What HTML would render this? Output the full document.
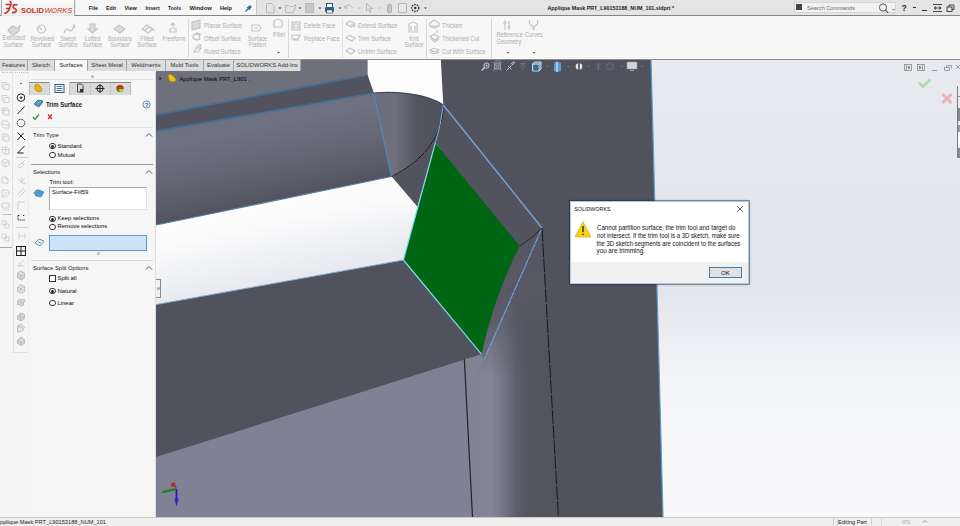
<!DOCTYPE html>
<html><head><meta charset="utf-8">
<style>
*{margin:0;padding:0;box-sizing:border-box}
html,body{width:960px;height:526px;overflow:hidden;background:#f4f4f4;font-family:"Liberation Sans",sans-serif;color:#222}
.abs{position:absolute}
#vp{position:absolute;left:0;top:0;width:960px;height:526px}
.menu{top:5px;font-size:6px;font-weight:bold;color:#1c1c1c;letter-spacing:0.1px}
.tab{position:absolute;top:59px;height:12px;background:#dcdcdc;border:1px solid #a4a4a4;border-bottom:none;font-size:5.9px;color:#333;text-align:center;line-height:10.5px;white-space:nowrap;overflow:hidden}
.tab.act{background:#f7f7f7;height:13px;color:#222}
.pmh{position:absolute;left:33px;font-size:5.9px;color:#1a1a1a;white-space:nowrap}
.pmt{position:absolute;left:57.5px;font-size:5.9px;color:#0a0a0a;white-space:nowrap}
.caret{left:145px}
.radio{position:absolute;left:49px;width:6.5px;height:6.5px;border-radius:50%;border:0.8px solid #333;background:#fff}
.radio.on::after{content:"";position:absolute;left:1.2px;top:1.2px;width:3px;height:3px;border-radius:50%;background:#222}
.rl{position:absolute;font-size:6.9px;color:#adadad;white-space:nowrap;line-height:6.6px;text-align:center;transform:scaleX(0.82);transform-origin:50% 0}
.rs{position:absolute;font-size:6.9px;color:#adadad;white-space:nowrap;line-height:7px;transform:scaleX(0.84);transform-origin:0 0}
</style></head><body>

<!-- TITLE BAR -->
<div class="abs" style="left:0;top:0;width:257px;height:16px;background:#f6f6f6"></div>
<div class="abs" style="left:257px;top:0;width:703px;height:16px;background:#e4e4e4"></div>
<div class="abs" style="left:256px;top:0;width:1px;height:16px;background:#c8c8c8"></div>
<div class="abs" style="left:0;top:15px;width:960px;height:1px;background:#858585"></div>
<div class="abs" style="left:1px;top:0;width:74px;height:18px;background:linear-gradient(#fafafa,#e9e9e9);border:1px solid #a9a9a9;border-top:none;box-shadow:0 1px 1px rgba(0,0,0,.25)"></div>
<svg class="abs" style="left:0;top:0" width="76" height="18" viewBox="0 0 76 18">
<path d="M9.5,1.2 q2.2,0.8 1.2,2.4 M5.5,4.5 h5.5 l-1.8,4 M6,8.5 h3.5 q-1.5,4.5 -5.2,4.8" fill="none" stroke="#c4312d" stroke-width="1.6"/>
<path d="M17.5,5 q-4,-1 -4.5,1.5 q0,1.5 2,2.2 q2,0.8 1,2.8 q-1,1.5 -4,1" fill="none" stroke="#c4312d" stroke-width="1.6"/>
<text x="21" y="13" font-family="Liberation Sans" font-weight="bold" font-size="8" fill="#c4312d" textLength="23" lengthAdjust="spacingAndGlyphs">SOLID</text>
<text x="44.5" y="13" font-family="Liberation Sans" font-style="italic" font-size="8" fill="#c4312d" textLength="27.5" lengthAdjust="spacingAndGlyphs">WORKS</text>
</svg>
<svg class="abs" style="left:80px;top:0" width="160" height="15" viewBox="80 0 160 15"><g font-family="Liberation Sans" font-weight="bold" font-size="6.2" fill="#1c1c1c"><text x="88.75" y="10.3" textLength="9.35" lengthAdjust="spacingAndGlyphs">File</text><text x="106.00" y="10.3" textLength="10.00" lengthAdjust="spacingAndGlyphs">Edit</text><text x="124.40" y="10.3" textLength="12.50" lengthAdjust="spacingAndGlyphs">View</text><text x="145.60" y="10.3" textLength="14.15" lengthAdjust="spacingAndGlyphs">Insert</text><text x="168.00" y="10.3" textLength="13.00" lengthAdjust="spacingAndGlyphs">Tools</text><text x="189.40" y="10.3" textLength="22.50" lengthAdjust="spacingAndGlyphs">Window</text><text x="220.00" y="10.3" textLength="12.00" lengthAdjust="spacingAndGlyphs">Help</text></g></svg>
<svg class="abs" style="left:244px;top:4px" width="9" height="9" viewBox="0 0 9 9"><path d="M1.5,7.5 L4,5" stroke="#2a6a8a" stroke-width="1.3"/><path d="M3,3.5 L5.5,6 L6,4.5 L7.5,3 L6,1.5 L4.5,3 z" fill="#2a6a8a" stroke="#2a6a8a" stroke-width="0.8"/></svg>
<svg class="abs" style="left:256px;top:0" width="180" height="16" viewBox="256 0 180 16">
<g fill="none" stroke="#b8b8b8" stroke-width="1">
<path d="M266.5,3.5 h5 l2.5,2.5 v7 h-7.5 z"/>
<path d="M285.5,5.5 h3 l1,1 h4 l2,-2 v2 l-2,6 h-8 z"/>
<rect x="305.5" y="3.5" width="8" height="9" fill="#c8c8c8"/>
<path d="M345,8 q2,-5 6,-2 l2,2 M345,5 v3 h3"/>
<path d="M366.5,3.5 l6,5 h-3 l1.5,3.5 l-1,0.5 l-1.5,-3.5 l-2,2 z"/>
<rect x="387.5" y="4" width="4" height="9" rx="2" fill="#c4c4c4" stroke="#b0b0b0"/>
<rect x="398.5" y="3.5" width="8" height="9" fill="#e8e8e8"/>
</g>
<g fill="#333"><path d="M278.5,7.5 h3 l-1.5,1.5z M298.5,7.5 h3 l-1.5,1.5z M318.5,7.5 h3 l-1.5,1.5z M338.5,7.5 h3 l-1.5,1.5z M424,7.5 h3 l-1.5,1.5z" /></g>
<g fill="#bbb"><path d="M358,7.5 h3 l-1.5,1.5z M377.5,7.5 h3 l-1.5,1.5z"/></g>
<g><rect x="325" y="7" width="9" height="5" rx="1" fill="#2e5f82"/><rect x="326.5" y="3.5" width="6" height="4" fill="#fff" stroke="#2e5f82"/><rect x="326.5" y="10" width="6" height="3" fill="#fff" stroke="#2e5f82" stroke-width="0.8"/></g>
<circle cx="415.3" cy="8" r="3.5" fill="none" stroke="#333" stroke-width="1.3" stroke-dasharray="1.5,1"/>
<circle cx="415.3" cy="8" r="1.2" fill="#333"/>
</svg>
<svg class="abs" style="left:545px;top:0" width="135" height="15" viewBox="545 0 135 15"><text x="547.5" y="10.3" font-family="Liberation Sans" font-weight="bold" font-size="6.1" fill="#1a1a1a" textLength="126.7" lengthAdjust="spacingAndGlyphs">Applique Mask PRT_L90153188_NUM_101.sldprt *</text></svg>
<div class="abs" style="left:794px;top:2px;width:102px;height:11px;background:#f2f2f2;border:1px solid #d6d6d6"></div>
<div class="abs" style="left:796px;top:4px;width:6px;height:6px;background:#444;"></div>
<svg class="abs" style="left:805px;top:2px" width="55" height="12" viewBox="805 2 55 12"><text x="807" y="10" font-family="Liberation Sans" font-size="5.8" fill="#6a6a6a" textLength="48" lengthAdjust="spacingAndGlyphs">Search Commands</text></svg>
<svg class="abs" style="left:877px;top:2px" width="20" height="12" viewBox="0 0 20 12"><circle cx="6" cy="5.5" r="3.6" fill="none" stroke="#555" stroke-width="1"/><path d="M8.6,8.2 L11,10.8" stroke="#555" stroke-width="1.2"/><path d="M15,7 h3 l-1.5,1.5z" fill="#777"/></svg>
<svg class="abs" style="left:900px;top:2px" width="10" height="12" viewBox="900 2 10 12"><text x="901.5" y="11.3" font-family="Liberation Sans" font-weight="bold" font-size="8.6" fill="#2a2a2a">?</text></svg>
<div class="abs" style="left:913px;top:7px;width:3px;height:1px;background:#333"></div>
<div class="abs" style="left:922px;top:10px;width:5px;height:1.2px;background:#333"></div>
<svg class="abs" style="left:932px;top:3px" width="12" height="10" viewBox="0 0 12 10"><path d="M1,1.5 h9 M1,8.5 h9 M2,5 h7 M4,3.5 l-2,1.5 l2,1.5 M7,3.5 l2,1.5 l-2,1.5" stroke="#333" stroke-width="0.9" fill="none"/></svg>
<svg class="abs" style="left:945px;top:3px" width="12" height="10" viewBox="0 0 12 10"><rect x="2" y="4" width="5" height="4.5" fill="none" stroke="#333" stroke-width="0.9"/><path d="M4,4 v-2 h5 v4.5 h-2" fill="none" stroke="#333" stroke-width="0.9"/></svg>

<!-- RIBBON -->
<div class="abs" style="left:0;top:16px;width:960px;height:43px;background:#f7f7f7"></div>
<div class="abs" style="left:0;top:58px;width:960px;height:1px;background:#fcfcfc"></div>
<div class="rl" style="left:0;top:35px;width:27px">Extruded<br>Surface</div>
<div class="rl" style="left:28px;top:35.9px;width:27px">Revolved<br>Surface</div>
<div class="rl" style="left:55px;top:35.9px;width:26px">Swept<br>Surface</div>
<div class="rl" style="left:80px;top:35.9px;width:25px">Lofted<br>Surface</div>
<div class="rl" style="left:105px;top:35.9px;width:30px">Boundary<br>Surface</div>
<div class="rl" style="left:134px;top:35.9px;width:26px">Filled<br>Surface</div>
<div class="rl" style="left:160px;top:35.9px;width:27px">Freeform</div>
<div class="abs" style="left:188px;top:19px;width:1px;height:39px;background:#d8d8d8"></div>
<div class="rs" style="left:204px;top:22.2px">Planar Surface</div>
<div class="rs" style="left:204px;top:35.2px">Offset Surface</div>
<div class="rs" style="left:204px;top:48.2px">Ruled Surface</div>
<div class="rl" style="left:245px;top:35.9px;width:25px">Surface<br>Flatten</div>
<div class="rl" style="left:270px;top:32.4px;width:18px">Fillet</div>
<div class="abs" style="left:288px;top:19px;width:1px;height:39px;background:#d8d8d8"></div>
<div class="rs" style="left:304px;top:22.2px">Delete Face</div>
<div class="rs" style="left:304px;top:35.2px">Replace Face</div>
<div class="abs" style="left:342px;top:19px;width:1px;height:39px;background:#e2e2e2"></div>
<div class="rs" style="left:358px;top:22.2px">Extend Surface</div>
<div class="rs" style="left:358px;top:35.2px">Trim Surface</div>
<div class="rs" style="left:358px;top:48.2px">Untrim Surface</div>
<div class="rl" style="left:402px;top:35.9px;width:24px">Knit<br>Surface</div>
<div class="abs" style="left:426px;top:19px;width:1px;height:39px;background:#d8d8d8"></div>
<div class="rs" style="left:442px;top:22.2px">Thicken</div>
<div class="rs" style="left:442px;top:35.2px">Thickened Cut</div>
<div class="rs" style="left:442px;top:48.2px">Cut With Surface</div>
<div class="abs" style="left:491px;top:19px;width:1px;height:39px;background:#d8d8d8"></div>
<div class="rl" style="left:494px;top:32.4px;width:28px">Reference<br>Geometry</div>
<div class="rl" style="left:522px;top:32.4px;width:24px">Curves</div>
<svg class="abs" style="left:0;top:16px" width="560" height="42" viewBox="0 16 560 42">
<g fill="none" stroke="#c4c4c4" stroke-width="1.2">
<path d="M8,30 l4,-4 l6,2 l2,-3 l-1,6 l-6,5 z" fill="#dadada"/>
<circle cx="41.5" cy="29" r="4"/><path d="M39,27 l3,3"/>
<path d="M64,33 q2,-6 5,-3 q3,3 5,-5 l1,3"/>
<path d="M90,24 h5 v5 h2 l-4.5,4 l-4.5,-4 h2 z" fill="#dadada"/>
<path d="M114,29 l5,-4 l6,4 l-5,4 z" fill="#dadada"/>
<path d="M142,29 l5,-4 l6,4 l-5,4 z M144,31 l5,-4 l6,4"/>
<path d="M170,29 q3,-2 6,0 v3 h-6 z M173,27 v-3 M171,25 l2,-2 l2,2"/>
<path d="M192,22 l8,-2 v8 l-8,2 z" fill="#dadada"/>
<path d="M193,36 q2,-3 6,-1 l1,4 q-4,2 -7,-1 z M195,34 q3,-2 6,1"/>
<path d="M194,52 l3,-4 h4 l-3,4 z M196,48 l2,-3 h3 l-2,3"/>
<path d="M252,25 h7 l2,3 l-2,3 h-7 z M254,28 h4"/>
<path d="M274,21 q4,-3 8,0 v6 h-8 z"/>
<path d="M292,22 h8 v8 h-8 z M294,24 h4 v4 h-4 z"/>
<path d="M292,35 h8 l-2,4 h-6 z M293,40 h6"/>
<path d="M346,24 l4,-3 l5,3 l-4,3 z M351,24 l4,3"/>
<path d="M346,38 q2,-3 5,-2 l4,2 l-3,3 z"/>
<path d="M346,51 l4,-3 l5,3 l-4,3 z"/>
<path d="M409,24 q4,-3 8,0 v8 h-8 z M411,26 v5 M415,26 v5"/>
<path d="M430,23 l4,-3 l5,3 v3 h-9 z M430,26 l4,2 l5,-2"/>
<path d="M430,37 l4,-3 l5,3 l-4,3 z M431,39 l4,3 l4,-3 M437,33 v-3"/>
<path d="M430,50 q4,-3 9,0 q-4,3 -9,0 z M430,52 q4,3 9,0"/>
<path d="M505,20 v10 M509,21 v9 M503,23 h4 M507,27 h4"/>
<path d="M530,20 q-2,3 1,5 q3,2 2,5 M537,20 q2,3 -1,5 q-3,2 -2,5"/>
</g>
<g fill="#555"><path d="M277,52 h3 l-1.5,1.5z M506.5,52 h3 l-1.5,1.5z M532.5,52 h3 l-1.5,1.5z"/></g>
</svg>

<svg id="vp" width="960" height="526" viewBox="0 0 960 526">
<defs>
<linearGradient id="bg" gradientUnits="userSpaceOnUse" x1="0" y1="59" x2="0" y2="517">
<stop offset="0" stop-color="#e8eaf0"/><stop offset="0.5" stop-color="#e3e5ed"/><stop offset="0.7" stop-color="#f4f5f8"/><stop offset="1" stop-color="#f9f9fb"/></linearGradient>
<linearGradient id="front" gradientUnits="userSpaceOnUse" x1="156" y1="131" x2="175" y2="225">
<stop offset="0" stop-color="#6e7080"/><stop offset="0.15" stop-color="#6f7282"/><stop offset="0.5" stop-color="#666877"/><stop offset="0.8" stop-color="#5a5c69"/><stop offset="1" stop-color="#4f505b"/></linearGradient>
<linearGradient id="white" gradientUnits="userSpaceOnUse" x1="160" y1="215" x2="178" y2="300">
<stop offset="0" stop-color="#fefefe"/><stop offset="0.35" stop-color="#fbfbfc"/><stop offset="1" stop-color="#e8eaef"/></linearGradient>
<linearGradient id="cyl" x1="0" y1="0" x2="1" y2="0">
<stop offset="0" stop-color="#6c6d7a"/><stop offset="0.3" stop-color="#6f707e"/><stop offset="0.62" stop-color="#545560"/><stop offset="1" stop-color="#50515c"/></linearGradient>
<linearGradient id="fillet" gradientUnits="userSpaceOnUse" x1="466" y1="0" x2="536" y2="0">
<stop offset="0" stop-color="#7f8293"/><stop offset="0.35" stop-color="#858798"/><stop offset="0.55" stop-color="#737585"/><stop offset="0.72" stop-color="#5c5e6b"/><stop offset="0.85" stop-color="#545662"/><stop offset="1" stop-color="#52545f"/></linearGradient>
<linearGradient id="band" gradientUnits="userSpaceOnUse" x1="0" y1="240" x2="0" y2="360">
<stop offset="0" stop-color="#555662"/><stop offset="0.6" stop-color="#5a5b67"/><stop offset="1" stop-color="#6b6c79"/></linearGradient>
<linearGradient id="fdark" gradientUnits="userSpaceOnUse" x1="0" y1="230" x2="0" y2="380">
<stop offset="0" stop-color="#555662" stop-opacity="1"/><stop offset="0.4" stop-color="#575864" stop-opacity="0.9"/><stop offset="1" stop-color="#52535e" stop-opacity="0"/></linearGradient>
</defs>
<rect x="156" y="59" width="804" height="458" fill="url(#bg)"/>
<!-- dark wall -->
<polygon points="440.8,59 651,59 663,517 440,517" fill="#50525d"/>
<!-- white gap top -->
<polygon points="367.6,59 440.8,59 443.3,105 373.8,93 367.6,75" fill="#fdfdfe"/>
<!-- top face -->
<polygon points="156,59 367.6,59 367.6,75 156,115" fill="#6e707c"/>
<!-- strip -->
<polygon points="156,115 367.6,75 373.8,93 156,131.2" fill="#52535e"/>
<!-- front face -->
<polygon points="156,131.2 373.8,93 391.5,176.5 156,225" fill="url(#front)"/>
<polygon points="373.8,93 443.3,105 542,228 519.7,246 435.3,143 417.5,207 391.5,176.5" fill="#52535e"/>
<!-- cylinder end -->
<path d="M373.8,93 C390,91.5 425,92 443.3,105 C443,135 425,160 391.5,176.5 Z" fill="url(#cyl)"/>
<!-- white face -->
<polygon points="156,225 391.5,176.5 417.5,207 403.4,260 156,304.6" fill="url(#white)"/>
<!-- lower front face -->
<polygon points="156,450 481.4,347 484.1,359.5 542,228 558.4,517 156,517" fill="#7f8294"/>
<!-- lower side face -->
<polygon points="156,304.6 403.4,260 481.4,354.2 156,457" fill="#50525d"/>
<polygon points="464.3,358.8 484.1,359.5 542,228 558.4,517 472.5,517" fill="url(#fillet)"/>
<polygon points="484.1,359.5 542,228 550.6,380 470,380" fill="url(#fdark)"/>
<!-- band between green and blue dashed -->
<path d="M519.7,246 L542,228 L484.1,359.5 L481.4,354.2 Q494,296 519.7,246 Z" fill="url(#band)"/>
<!-- green -->
<path d="M435.3,143 L519.7,246 Q494,296 481.4,354.2 L403.4,260 Z" fill="#006614"/>
<!-- edges -->
<g fill="none" stroke-width="1.2">
<line x1="156" y1="115" x2="367.6" y2="75" stroke="#3e7099" stroke-width="1.7"/>
<line x1="156" y1="131.2" x2="373.8" y2="93" stroke="#3e7099" stroke-width="1.7"/>
<line x1="156" y1="225" x2="391.5" y2="176.5" stroke="#4d7ea3"/>
<line x1="156" y1="304.6" x2="403.4" y2="260" stroke="#7fb0d4" stroke-width="1"/>
<line x1="373.8" y1="93" x2="391.5" y2="176.5" stroke="#4f8ab5"/>
<path d="M373.8,93 C390,91.5 425,92 443.3,105" stroke="#3d4a5e"/>
<path d="M443.3,105 C443,135 425,160 391.5,176.5" stroke="#151515" stroke-width="0.9" stroke-dasharray="4,0.8"/>
<path d="M435.3,143 Q441,125 443.3,105" stroke="#7ab4e0" stroke-width="1"/>
<line x1="443.3" y1="105" x2="542" y2="228" stroke="#76a2d4" stroke-width="1.4"/>
<line x1="542" y1="228" x2="484.1" y2="359.5" stroke="#6aa2d8" stroke-width="1.2" stroke-dasharray="8,0.7"/>
<line x1="435.3" y1="143" x2="403.4" y2="260" stroke="#7fd8ee"/>
<line x1="403.4" y1="260" x2="481.4" y2="354.2" stroke="#7fd8ee"/>
<path d="M519.7,246 Q533,238 542,228" stroke="#1a1a1a" stroke-width="0.8"/>
<line x1="542" y1="228" x2="558.4" y2="517" stroke="#161616" stroke-width="1" stroke-dasharray="14,1.2"/>
<line x1="464.3" y1="358.8" x2="472.5" y2="517" stroke="#222"/>
<line x1="651" y1="59" x2="663" y2="517" stroke="#5aa0c8"/>
<line x1="0" y1="59.5" x2="960" y2="59.5" stroke="#8c8c8c" stroke-width="1"/>
</g>
</svg>

<!-- TABS -->
<div class="abs" style="left:0;top:59px;width:156px;height:12px;background:#f5f5f5"></div>
<div class="tab" style="left:-1px;width:29px">Features</div>
<div class="tab" style="left:27px;width:28px">Sketch</div>
<div class="tab act" style="left:54px;width:34px">Surfaces</div>
<div class="tab" style="left:87px;width:40px">Sheet Metal</div>
<div class="tab" style="left:126px;width:40px">Weldments</div>
<div class="tab" style="left:165px;width:39px">Mold Tools</div>
<div class="tab" style="left:203px;width:31px">Evaluate</div>
<div class="tab" style="left:233px;width:68px">SOLIDWORKS Add-Ins</div>

<!-- LEFT PANEL -->
<div class="abs" style="left:0;top:71px;width:156px;height:446px;background:#f5f5f5"></div>
<div class="abs" style="left:29px;top:72px;width:126px;height:445px;background:#f6f6f6"></div>
<div class="abs" style="left:2px;top:72px;width:10px;height:1px;border-top:1px dotted #c0c0c0"></div>
<div class="abs" style="left:15px;top:72px;width:13px;height:1px;border-top:1px dotted #c0c0c0"></div>
<div class="abs" style="left:12px;top:72px;width:1px;height:176px;background:#e2e2e2"></div>
<div class="abs" style="left:0;top:247px;width:12px;height:1px;background:#a8a8a8"></div>
<div class="abs" style="left:13px;top:250px;width:1px;height:102px;background:#e2e2e2"></div>
<div class="abs" style="left:13px;top:352px;width:15px;height:1px;background:#e0e0e0"></div>
<div class="abs" style="left:28px;top:72px;width:1px;height:280px;background:#eeeeee"></div>
<div class="abs" style="left:31px;top:79px;width:122px;height:1px;background:#e4e4e4"></div>
<div class="abs" style="left:90.5px;top:74.5px;width:3px;height:3px;border-radius:50%;background:#bbb"></div>

<svg class="abs" style="left:0;top:72px" width="29" height="282" viewBox="0 72 29 282">
<g fill="none" stroke="#cdcdcd" stroke-width="0.9">
<path d="M2,82.5 h5 l2,2 v5 h-5 l-2,-2 z M4,84.5 h5 M4,84.5 v5"/>
<path d="M2,95.5 h5 l2,2 v5 h-5 l-2,-2 z M4,97.5 h5 M4,97.5 v5"/>
<path d="M2,108 h5 l2,2 v5 h-5 l-2,-2 z M2,110.5 h7 M4,108 v7"/>
<path d="M2,121 h5 l2,2 v5 h-5 l-2,-2 z M2,123 l3,2 h4"/>
<path d="M2,134 h5 l2,2 v5 h-5 l-2,-2 z M4,136 h5 M4,136 v5"/>
<path d="M2,147 h5 l2,2 v5 h-5 l-2,-2 z M2,149.5 h7 M5.5,147 v7"/>
<path d="M2,161 l3,-2 l4,2 v4 l-4,2 l-3,-2 z M5,163 v4 M2,161 l3,2 l4,-2"/>
<path d="M2,177 h4 l2,2 v4 h-6 z M6,177 v2 h2"/>
<path d="M2,190 h5 l2,2 v2 l-3,3 h-4 z M3,196 l4,-4"/>
<path d="M2,203 h7 v5 h-7 z M4,210 h2 M7,210 h2"/>
<path d="M2,221 h4 v4 h-4 z M5,224 h4 v4 h-4 z"/>
<path d="M2,234 h4 v4 h-4 z M5,237 h4 v4 h-4 z"/>
<path d="M19,165 q3,-3 5,-1 q-2,4 -5,4 q-2,-1 0,-3 z M21,164 l4,-4"/>
<path d="M18,179 l4,3 M20,183 l5,-5 M22,177 v6 h4"/>
<path d="M17,195 l7,-7 M19,197 l7,-7"/>
<path d="M18,210 v-8 h7"/>
<path d="M19,236 h6 M19,233 v6 M25,233 v6"/>
<path d="M17.5,266 l6,-6 M17.5,266 h7 M21,266 q0,-2 -1.5,-3"/>
</g>
<g fill="#d6d6d6" stroke="#b4b4b4" stroke-width="0.8">
<path d="M17.5,273 l3,-2 l4,2 v5 l-3,2 l-4,-2 z M17.5,273 l3.5,2 l3.5,-2 M21,275 v5"/>
<path d="M17.5,287 l3,-2.5 l4,2 v5 l-3,2 l-4,-2 z M19,287 l4,4 M23,287 l-4,4" fill="#e2e2e2"/>
<path d="M17.5,301 l2.5,-2 l2,1 l2,-1 l1,2 l-2,2 l1,2 l-3,1 l-2,-2 l-1.5,1 z M19.5,301 l3,3"/>
<path d="M17.5,316 l3,-3 l4,1.5 v4 l-3,2.5 l-4,-1.5 z M20.5,313 v7 M17.5,316 l7,2"/>
<path d="M17.5,330 v-4 l3,-2 l4,3 l-2,4 l-5,1 z M17.5,326 l5,2" fill="#e4e4e4"/>
<path d="M17.5,340 l3.5,-3 l3.5,2.5 v4 l-3.5,2 l-3.5,-2 z M21,339.5 v5.5 M17.5,340 l3.5,2 l3.5,-2"/>
</g>
<path d="M2.5,214.5 h9" stroke="#bdbdbd" stroke-width="1"/>
<path d="M16,157.5 h12 M16,227.5 h12" stroke="#c8c8c8" stroke-width="0.8"/>
<g fill="none" stroke="#1e1e1e" stroke-width="1">
<circle cx="21" cy="83.5" r="0.7" fill="#1e1e1e" stroke="none"/>
<circle cx="21" cy="97.6" r="3.8"/><circle cx="21" cy="97.6" r="0.8" fill="#1e1e1e"/>
<path d="M17.5,114 l7,-7.5"/>
<circle cx="21" cy="123" r="3.8" stroke-dasharray="1.5,0.6"/>
<path d="M17.5,132.5 q3,3 7.5,7.5 M17.5,140 l6,-7"/>
<path d="M17.5,153 l7,-7 M17.5,153 h6"/>
<path d="M18,215.5 v4.5 h7 M18,215.5 h2 M23,215.5 h2" stroke-dasharray="1.2,0.8"/>
<rect x="16.5" y="246.5" width="9" height="9"/><path d="M21,246.5 v9 M16.5,251 h9"/>
</g>
</svg>
<!-- PM tabs -->
<div class="abs" style="left:29px;top:82px;width:102px;height:13px;background:#d9d9d9;border:1px solid #bdbdbd;border-top:1px solid #8a8a8a;border-bottom:none"></div>
<div class="abs" style="left:49px;top:82px;width:20.5px;height:13px;background:#f6f6f6;border-left:1px solid #c3c3c3;border-right:1px solid #c3c3c3"></div>
<div class="abs" style="left:90.2px;top:83px;width:1px;height:12px;background:#c3c3c3"></div>
<div class="abs" style="left:110px;top:83px;width:1px;height:12px;background:#c3c3c3"></div>
<svg class="abs" style="left:29px;top:82px" width="102" height="13" viewBox="29 82 102 13">
<path d="M35,85 q3,-2 5,1 l2,3 q0,3 -3,3 q-3,-1 -4,-3 z" fill="#e8b800" stroke="#a07800" stroke-width="0.6"/>
<rect x="55" y="84.5" width="9" height="8" fill="#fff" stroke="#2b5a80" stroke-width="1"/>
<path d="M56.5,86.5 h6 M56.5,88.5 h6 M56.5,90.5 h6" stroke="#2b5a80" stroke-width="0.8"/>
<path d="M77.5,84 h4 l1.5,1.5 v4 M77.5,84 v8 h3" fill="none" stroke="#333" stroke-width="0.9"/><rect x="80" y="89" width="3.5" height="3.5" fill="#333"/>
<circle cx="100" cy="88.5" r="3.2" fill="none" stroke="#222" stroke-width="1"/><path d="M100,84 v9 M95.5,88.5 h9" stroke="#222" stroke-width="1"/>
<circle cx="120" cy="88.5" r="3.6" fill="#2a8f2a"/><path d="M116.4,88.5 a3.6,3.6 0 0 1 7.2,0 z" fill="#d43020"/><path d="M118.5,89 h5 a3.6,3.6 0 0 1 -3.5,3 z" fill="#f0c000"/>
</svg>
<!-- PM content -->
<svg class="abs" style="left:33px;top:99px" width="11" height="9" viewBox="0 0 11 9"><path d="M1,5 l4,-4 l5,1 l-4,5 z" fill="#5aa0c8" stroke="#2a5a7a" stroke-width="0.7"/><path d="M2,6 l4,2 l4,-5" fill="none" stroke="#2a5a7a" stroke-width="0.7"/></svg>
<svg class="abs" style="left:44px;top:98px" width="42" height="12" viewBox="44 98 42 12"><text x="46" y="106.8" font-family="Liberation Sans" font-weight="bold" font-size="6.6" fill="#222" textLength="36" lengthAdjust="spacingAndGlyphs">Trim Surface</text></svg>
<svg class="abs" style="left:141.5px;top:99.5px" width="9" height="9" viewBox="0 0 9 9"><circle cx="4.5" cy="4.5" r="3.6" fill="#eef4fa" stroke="#5a7a9a" stroke-width="0.9"/><text x="2.7" y="6.8" font-size="6" font-family="Liberation Sans" font-weight="bold" fill="#3a5a7a">?</text></svg>
<svg class="abs" style="left:32px;top:113px" width="24" height="8" viewBox="0 0 24 8"><path d="M1,4 l2,2.5 l4,-5" stroke="#3a9a3a" stroke-width="1.4" fill="none"/><path d="M16,1.5 l4,4.5 M20,1.5 l-4,4.5" stroke="#c82a2a" stroke-width="1.2"/></svg>
<div class="abs" style="left:31px;top:127px;width:122px;height:1px;background:#e0e0e0"></div>
<div class="pmh" style="top:131.8px">Trim Type</div>
<svg class="abs caret" style="top:132px" width="8" height="6" viewBox="0 0 8 6"><path d="M1,4.5 l3,-3 l3,3" fill="none" stroke="#444" stroke-width="0.9"/></svg>
<div class="radio on" style="top:142.8px"></div><div class="pmt" style="top:142.5px">Standard</div>
<div class="radio" style="top:151.8px"></div><div class="pmt" style="top:151.5px">Mutual</div>
<div class="abs" style="left:31px;top:164px;width:122px;height:1px;background:#9a9a9a"></div>
<div class="pmh" style="top:169px">Selections</div>
<svg class="abs caret" style="top:169px" width="8" height="6" viewBox="0 0 8 6"><path d="M1,4.5 l3,-3 l3,3" fill="none" stroke="#444" stroke-width="0.9"/></svg>
<div class="pmt" style="left:49.5px;top:178.5px">Trim tool:</div>
<div class="abs" style="left:49px;top:187px;width:98px;height:23px;background:#fff;border:1px solid #a8a8a8;border-right-color:#e0e0e0;border-bottom-color:#e0e0e0"></div>
<div class="pmt" style="left:52px;top:188.8px">Surface-Fill59</div>
<svg class="abs" style="left:33px;top:188px" width="12" height="10" viewBox="0 0 12 10"><path d="M1,5 q2,-4 5,-3 l5,2 l-3,5 l-5,-1 z" fill="#4aa0d0" stroke="#2a6a9a" stroke-width="0.6"/></svg>
<div class="radio on" style="top:215.5px"></div><div class="pmt" style="top:215px">Keep selections</div>
<div class="radio" style="top:223.7px"></div><div class="pmt" style="top:223.2px">Remove selections</div>
<svg class="abs" style="left:34px;top:238px" width="11" height="9" viewBox="0 0 11 9"><path d="M1,5 l4,-4 l5,2 l-4,5 z" fill="#eaf3fa" stroke="#4a7a9a" stroke-width="0.8"/><path d="M4,4 l3,1" stroke="#4a7a9a" stroke-width="0.7"/></svg>
<div class="abs" style="left:49px;top:235px;width:98px;height:16px;background:#cce4f7;border:1px solid #5a9ad0"></div>
<div class="abs" style="left:96.5px;top:252px;width:3px;height:3px;border-radius:50%;border:0.8px solid #999"></div>
<div class="abs" style="left:31px;top:260px;width:122px;height:1px;background:#dcdcdc"></div>
<div class="pmh" style="top:264.5px">Surface Split Options</div>
<svg class="abs caret" style="top:265px" width="8" height="6" viewBox="0 0 8 6"><path d="M1,4.5 l3,-3 l3,3" fill="none" stroke="#444" stroke-width="0.9"/></svg>
<div class="abs" style="left:49px;top:275.3px;width:7px;height:7px;border:1px solid #333;background:#fff"></div><div class="pmt" style="top:275px">Split all</div>
<div class="radio on" style="top:287.8px"></div><div class="pmt" style="top:287.5px">Natural</div>
<div class="radio" style="top:299.7px"></div><div class="pmt" style="top:299.5px">Linear</div>


<!-- VIEWPORT OVERLAYS -->
<svg class="abs" style="left:156px;top:71px" width="160" height="16" viewBox="156 71 160 16">
<path d="M159.5,76.5 l2.5,2 l-2.5,2 z" fill="#2a3040"/>
<path d="M168,75 q3,-2 5,1 l3,3 q0,3 -3,3 q-3,0 -4,-2 z" fill="#f0c010" stroke="#a08000" stroke-width="0.7"/>
</svg>
<div class="abs" style="left:179.5px;top:75.5px;font-size:5.8px;color:#050505;white-space:nowrap">Applique Mask PRT_L901 .</div>
<svg class="abs" style="left:470px;top:59px" width="185" height="16" viewBox="470 59 185 16">
<g fill="none" stroke-width="1">
<circle cx="486.5" cy="65.5" r="2.6" stroke="#c8d2de"/><path d="M484.6,67.5 l-3,3" stroke="#c8d2de" stroke-width="1.3"/><path d="M485.3,65.5 h2.4 M486.5,64.3 v2.4" stroke="#c8d2de" stroke-width="0.7"/>
<rect x="494.5" y="63" width="6" height="6" stroke="#8f9cab" fill="#6a7586"/><path d="M493,62 l9,9 M502,62 l-9,9" stroke="#98a4b2" stroke-width="0.7"/><path d="M495,61 h6" stroke="#98a4b2" stroke-width="0.7"/>
<path d="M506.5,70.5 l5,-5 M508,66 l3.5,3.5 M511,64 l3,-2.5 l0.8,1 l-3,2.5" stroke="#b9c4d2" stroke-width="1"/>
<path d="M520,63.5 h6 M523,63.5 v6.5 M520.5,66.5 l2.5,-3 l2.5,3" stroke="#6c7484" stroke-width="0.9"/>
</g>
<path d="M532.5,64 l2,-2 h6.5 v7 l-2,2 h-6.5 z" fill="#5d8fb8" stroke="#d8e6f2" stroke-width="0.9"/>
<path d="M532.5,64 h6.5 v7 M539,64 l2,-2" fill="none" stroke="#d8e6f2" stroke-width="0.8"/>
<rect x="533.5" y="65" width="5" height="5.5" fill="#3c6a92"/>
<path d="M554,63 l3,-1.5 l4,1.5 v8 l-4,1.2 l-3,-1.2 z" fill="#5b9bd0"/><path d="M557,61.8 v10" stroke="#c8e2f6" stroke-width="1.3"/>
<circle cx="579" cy="66.5" r="3.3" fill="#e6e6e6"/><path d="M579,63 v7" stroke="#3a3a3a" stroke-width="1.4"/>
<g fill="none" stroke="#6a7282" stroke-width="0.8"><path d="M596,63.5 l5,6 M601,63.5 l-5,6 M598.5,62 v9"/><path d="M607,64 h6 v5 h-6 z M610,62 v2 M610,69 v2"/></g>
<rect x="627" y="62" width="10" height="7" fill="#cfd2d6" stroke="#9aa0a8" stroke-width="0.6"/><path d="M630,70.5 h4" stroke="#9aa0a8"/>
<g fill="#7a8292"><path d="M546,66 h2.4 l-1.2,1.2z M567,66 h2.4 l-1.2,1.2z M587.5,66 h2.4 l-1.2,1.2z M620.5,66 h2.4 l-1.2,1.2z M641,66 h2.4 l-1.2,1.2z"/></g>
</svg>
<svg class="abs" style="left:900px;top:60px" width="60" height="48" viewBox="900 60 60 48">
<g fill="none" stroke="#888" stroke-width="0.8">
<rect x="904.5" y="64.5" width="7" height="6"/><path d="M906.5,65 v5"/><path d="M909.5,66 l-1.8,1.5 l1.8,1.5z" fill="#888"/>
<rect x="917.5" y="64.5" width="7" height="6"/><path d="M922.5,65 v5"/><path d="M919.5,66 l1.8,1.5 l-1.8,1.5z" fill="#888"/>
<path d="M932,70.5 h5"/>
<path d="M944.5,67.5 h5 v3 h-5 z M946.5,67.5 v-2 h5 v3"/>
<path d="M956,65 l4,4 M960,65 l-4,4"/>
</g>
<path d="M919,82.5 l4,4 l7.5,-7" stroke="#b2dba9" stroke-width="3" fill="none"/>
<path d="M942.5,94 l9,9 M951.5,94 l-9,9" stroke="#ebb4b4" stroke-width="3" fill="none"/>
</svg>
<div class="abs" style="left:957px;top:86px;width:3px;height:72px;background:#ececec;border-left:1px solid #7a7a7a"></div>
<div class="abs" style="left:958px;top:96px;width:2px;height:1px;background:#999"></div>
<div class="abs" style="left:958px;top:107.5px;width:2px;height:13px;background:#8a8a8a"></div>
<div class="abs" style="left:958px;top:124.5px;width:2px;height:7px;background:#9a9a9a"></div>
<div class="abs" style="left:958px;top:132px;width:2px;height:14px;background:#fff"></div>
<div class="abs" style="left:958px;top:148px;width:2px;height:10px;background:#8a8a8a"></div>
<div class="abs" style="left:155px;top:72px;width:1px;height:445px;background:#dcdcdc"></div>
<div class="abs" style="left:156px;top:279px;width:5px;height:19px;background:#eef0f4;border:1px solid #8a8a8a;border-left:none"></div>
<div class="abs" style="left:156.5px;top:286.5px;width:3px;height:3px;border-radius:50%;background:#aaa"></div>
<svg class="abs" style="left:156px;top:474px" width="30" height="40" viewBox="156 474 30 40">
<path d="M176.5,489 L176.5,503" stroke="#2020b8" stroke-width="1.8"/><path d="M174.3,498.5 l2.2,8 l2.2,-8 z" fill="#2a2ad0"/>
<path d="M176,489 L163,492" stroke="#1f7a1f" stroke-width="2"/><path d="M160.5,493 l5,-3.5 l0.8,3.5z" fill="#2a8a2a"/>
<circle cx="173.2" cy="484.7" r="2.3" fill="#c02828"/><path d="M175,486 l1.5,2.5" stroke="#a03030" stroke-width="1.2"/>
<path d="M170,480 l2,2 M172,480 l-2,2" stroke="#d06060" stroke-width="0.6"/>
</svg>

<!-- DIALOG -->
<div class="abs" style="left:569.5px;top:201px;width:179px;height:83px;background:#fff;border:1px solid #a6cbe0;box-shadow:0 0 0 1px rgba(30,50,60,.45),0 0 3px rgba(0,0,0,.3)"></div>
<div class="abs" style="left:570.5px;top:261.5px;width:177px;height:21.5px;background:#f0f0f0"></div>
<svg class="abs" style="left:572px;top:203px" width="44" height="10" viewBox="572 203 44 10"><text x="574.2" y="210.8" font-family="Liberation Sans" font-size="6.2" fill="#111" textLength="36.4" lengthAdjust="spacingAndGlyphs">SOLIDWORKS</text></svg>
<svg class="abs" style="left:736px;top:205px" width="8" height="8" viewBox="0 0 8 8"><path d="M1,1 l6,6 M7,1 l-6,6" stroke="#333" stroke-width="0.8"/></svg>
<svg class="abs" style="left:574px;top:220px" width="18" height="18" viewBox="0 0 18 18"><path d="M9,1.5 L17,17 H1 Z" fill="#f5d11f" stroke="#c8a800" stroke-width="0.6"/><path d="M9,6 v6" stroke="#111" stroke-width="1.2"/><circle cx="9" cy="14.2" r="0.8" fill="#111"/></svg>
<svg class="abs" style="left:590px;top:220px" width="160" height="36" viewBox="590 220 160 36">
<g font-family="Liberation Sans" font-size="6.3" fill="#111">
<text x="597" y="230.2" textLength="138.4" lengthAdjust="spacingAndGlyphs">Cannot partition surface, the trim tool and target do</text>
<text x="597" y="237.8" textLength="142.6" lengthAdjust="spacingAndGlyphs">not intersect. If the trim tool is a 3D sketch, make sure</text>
<text x="596.5" y="245.5" textLength="143.7" lengthAdjust="spacingAndGlyphs">the 3D sketch segments are coincident to the surfaces</text>
<text x="596.5" y="253.2" textLength="48.5" lengthAdjust="spacingAndGlyphs">you are trimming.</text>
</g></svg>
<div class="abs" style="left:709px;top:267px;width:33px;height:11px;background:#e1e1e1;border:1px solid #3c7fb1"></div>
<div class="abs" style="left:721px;top:268.7px;font-size:6.2px;color:#111">OK</div>
<!-- STATUS BAR -->
<div class="abs" style="left:0;top:517px;width:960px;height:9px;background:#efefef;border-top:1px solid #c8c8c8"></div>
<svg class="abs" style="left:0;top:517px" width="120" height="9" viewBox="0 517 120 9"><text x="0" y="524.3" font-family="Liberation Sans" font-size="6" fill="#222" textLength="106" lengthAdjust="spacingAndGlyphs">pplique Mask PRT_L90153188_NUM_101</text></svg>
<div class="abs" style="left:833px;top:518px;width:1px;height:8px;background:#d0d0d0"></div>
<div class="abs" style="left:871px;top:518px;width:1px;height:8px;background:#d0d0d0"></div>
<div class="abs" style="left:838px;top:518.5px;font-size:5.6px;color:#222;white-space:nowrap">Editing Part</div>
<div class="abs" style="left:902px;top:518.5px;font-size:5.3px;color:#aaa;white-space:nowrap">IPS</div>
<svg class="abs" style="left:922px;top:519px" width="6" height="5" viewBox="0 0 6 5"><path d="M1,3.5 l2,-2 l2,2" fill="none" stroke="#777" stroke-width="0.8"/></svg>
<div class="abs" style="left:836.5px;top:518px;width:1px;height:8px;background:#dadada"></div>
<div class="abs" style="left:880.5px;top:518px;width:1px;height:8px;background:#dadada"></div>
</body></html>
